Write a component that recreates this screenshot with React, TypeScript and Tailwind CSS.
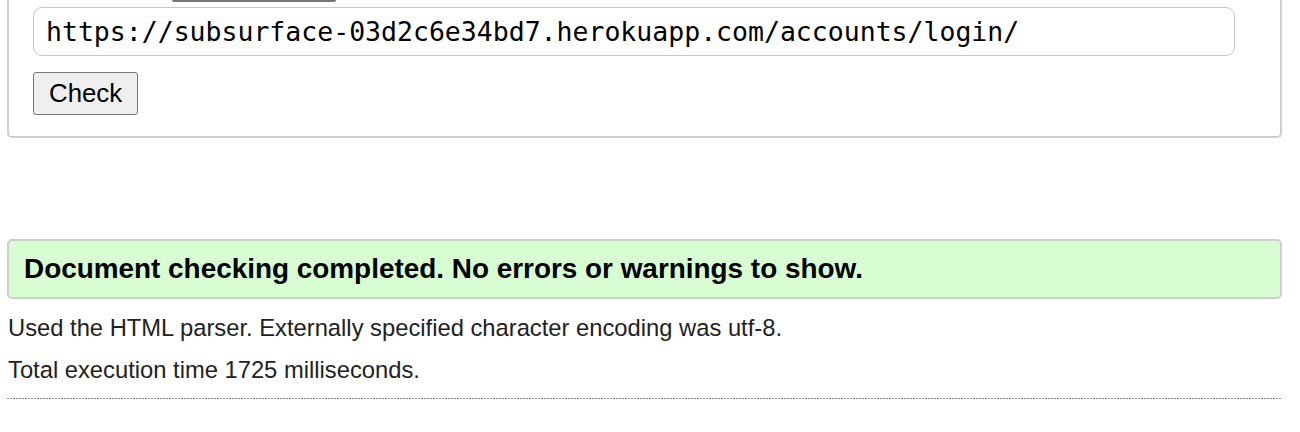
import React from "react";

export default function App() {
  return (
    <div className="w-[1289px] h-[432px] bg-white overflow-hidden font-['Liberation_Sans',Arial,sans-serif] text-[#222]">
      <div className="mx-[7px] border-x-2 border-b-2 border-[#cfcfcf] rounded-b-[5px] pl-6 pb-[21px]">
        <div className="ml-[139px] w-[164px] h-[2px] bg-[#787878] rounded-b-[2px]" />
        <div className="mt-[5px] w-[1202px] h-[49px] border-[1.5px] border-[#c8c8c8] rounded-[9px] flex items-center pl-[12px] font-['DejaVu_Sans_Mono',monospace] text-[26.5px] text-black">
          https://subsurface-03d2c6e34bd7.herokuapp.com/accounts/login/
        </div>
        <button className="mt-[16px] h-[43px] px-[15px] bg-[#efefef] border border-[#767676] rounded-[3px] text-[25.8px] text-black leading-none font-['Liberation_Sans',Arial,sans-serif]">
          Check
        </button>
      </div>
      <div className="mt-[101px] mx-[7px] h-[60px] border-2 border-[#cfcfcf] rounded-[5px] bg-[#d8fdd3] flex items-center pl-[15px] text-[27.9px] font-bold text-black">
        Document checking completed. No errors or warnings to show.
      </div>
      <p className="mt-[15px] ml-[8px] text-[23.75px] leading-[28px]">Used the HTML parser. Externally specified character encoding was utf-8.</p>
      <p className="mt-[14px] ml-[8px] text-[23.75px] leading-[28px]">Total execution time 1725 milliseconds.</p>
      <div className="mt-[14px] mx-[7px] h-px bg-[repeating-linear-gradient(to_right,#8a8a8a_0_2px,transparent_2px_3px)]" />
    </div>
  );
}
